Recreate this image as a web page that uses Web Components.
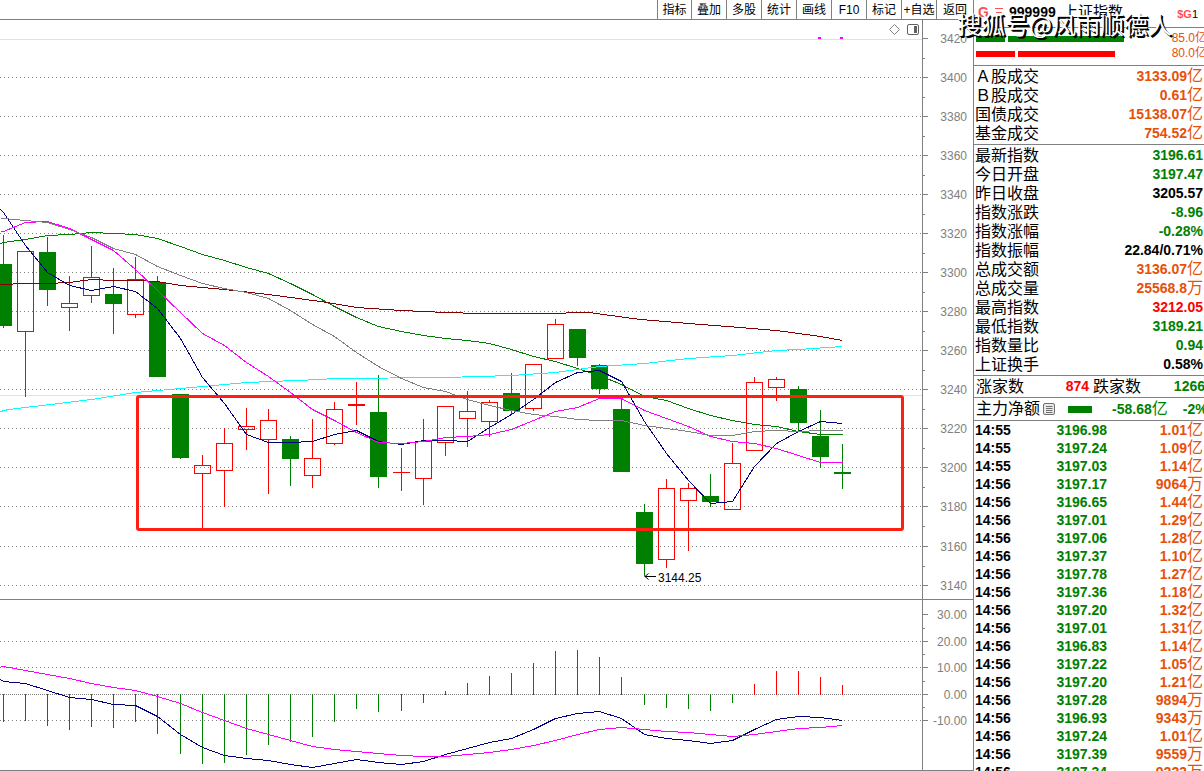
<!DOCTYPE html>
<html lang="zh-CN">
<head>
<meta charset="utf-8">
<title>上证指数</title>
<style>
html, body { margin: 0; height: 100%; }
body { overflow: hidden; background: #fff; color: #000; font: 12px "Liberation Sans", "Noto Sans CJK SC", sans-serif; }
</style>
</head>
<body>
<stock-app></stock-app>
<script>
const GREEN = '#008000', RED = '#ff0000', GRAY = '#808080';
const attach = (el, html) => { el.attachShadow({ mode: 'open' }).innerHTML = html; };

/* Toolbar */
customElements.define('tool-bar', class extends HTMLElement {
  constructor() {
    super();
    attach(this, `<style>
      :host { display: flex; justify-content: flex-end; height: 19px; flex: none; border-bottom: 1px solid #808080; overflow: hidden; }
    </style><slot></slot>`);
  }
});
customElements.define('tool-item', class extends HTMLElement {
  constructor() {
    super();
    attach(this, `<style>
      :host { display: block; width: 35px; }
      :host(:first-child) { width: 34px; }
      :host(:last-child) { width: 37px; }
      button { width: 100%; height: 19px; padding: 0; margin: 0; border: 0; border-left: 1px solid #808080; background: none;
        color: #000; font: inherit; line-height: 18px; white-space: nowrap; text-align: center; }
    </style><button type="button"><slot></slot></button>`);
  }
});

/* Charts */
const CX = [3,25,47,69,91,113,135,157,180,202,224,246,268,290,312,334,356,378,401,423,445,467,489,511,533,555,577,599,621,644,666,688,710,732,754,776,798,820,842];
const svgRect = (x, y, w, h, f) => `<rect x="${x}" y="${y}" width="${w}" height="${h}" fill="${f}"/>`;
const poly = (pts, c) => `<polyline transform="translate(.5 .5)" points="${pts}" fill="none" stroke="${c}" stroke-width="1"/>`;
const series = (ys, c) => poly(ys.map((y, i) => (i === 0 ? 0 : CX[i - 1]) + ',' + y).join(' '), c);
const dots = (y, gap) => `<line x1="0" x2="922" y1="${y}" y2="${y}" transform="translate(0 .5)" stroke="${GRAY}" stroke-dasharray="1 ${gap}"/>`;
const chartCss = `<style>
  :host { display: block; }
  svg { display: block; width: 100%; height: auto; }
  text { font: 12px "Liberation Sans", sans-serif; fill: #808080; }
  .mark { fill: #000; }
</style>`;

customElements.define('price-chart', class extends HTMLElement {
  constructor() {
    super();
    /* colour, high, body top, body bottom, low */
    const candles = [
      ['g',235,264,326,328],['r',251,251,332,397],['g',237,252,290,306],['r',276,303,308,331],['r',246,277,296,303],
      ['g',268,294,304,334],['r',257,279,315,318],['g',276,282,377,377],['g',394,394,458,459],['r',455,465,474,528],
      ['r',428,443,471,507],['r',408,426,430,450],['r',409,420,440,494],['g',436,439,459,486],['r',419,458,476,488],
      ['r',402,409,444,445],['r',382,404,406,425],['g',375,412,477,488],['r',448,472,473,491],['r',419,441,479,505],
      ['r',406,406,443,456],['r',391,411,419,447],['r',400,402,422,437],['g',373,393,411,414],['r',364,364,409,411],
      ['r',319,324,359,359],['g',329,329,358,366],['g',364,365,389,394],['g',399,409,472,472],['g',504,512,564,576],
      ['r',479,488,560,568],['r',483,488,501,551],['g',474,496,502,507],['r',443,463,510,510],['r',377,382,451,451],
      ['r',377,379,388,401],['g',386,389,423,431],['g',410,436,457,468],['g',444,472,474,489]];
    const grid = [77,116,155,194,233,272,311,350,389,428,467,506,546,585];
    const levels = [38, ...grid];
    let s = '';
    grid.forEach(y => s += dots(y, 3));
    s += svgRect(0, 39, 922, 1, '#ffff00') + svgRect(0, 395, 922, 1, '#ffff00');
    candles.forEach(([k, hi, t, b, lo], i) => {
      const x = CX[i], c = k === 'g' ? GREEN : RED;
      if (k === 'g' || b - t < 3) {
        s += svgRect(x, hi, 1, lo - hi, c) + svgRect(x - 8, t, 17, b - t, c);
      } else {
        s += svgRect(x, hi, 1, t - hi, c) + svgRect(x, b, 1, lo - b, c);
        s += `<rect x="${x - 8}" y="${t}" width="16" height="${b - t - 1}" transform="translate(.5 .5)" fill="none" stroke="${c}"/>`;
      }
    });
    s += series([243,242,239,235,234,232,233,234,238,246,254,260,267,273,283,294,306,317,326,331,335,338,340,343,349,356,361,368,375,384,396,400,408,415,420,424,426,431,434,434], GREEN);
    s += poly('0,284 25,283 47,283 69,282 91,279 113,280 135,280 157,281 180,285 224,289 268,294 320,301 356,307 401,310 445,312 480,313 543,313 589,312 603,314 640,319 688,323 727,326 776,330 798,333 820,336 842,340', '#800000');
    s += poly('0,411 8,409 50,404 91,399 135,392 180,388 202,386 246,382 320,379 334,378 445,377 511,375 555,372 599,366 644,363 688,358 732,355 776,350 798,349 842,346', '#00ffff');
    s += series([209,212,245,272,285,290,286,291,308,338,377,403,434,442,442,441,434,430,441,444,440,440,441,427,414,399,382,372,370,381,421,453,480,503,501,466,443,431,421,423], '#000080');
    s += series([231,231,222,221,228,239,250,269,290,312,333,345,362,376,392,409,420,432,442,443,441,437,436,434,429,420,411,407,398,398,410,418,426,436,441,443,448,455,462,462], '#ff00ff');
    s += series([218,218,220,222,229,237,248,254,266,275,283,288,292,298,310,324,336,352,366,378,387,391,399,405,410,414,416,419,420,420,425,428,431,435,435,431,430,431,430,430], GRAY);
    s += svgRect(818, 37, 3, 2, '#ff00ff') + svgRect(840, 37, 3, 2, '#ff00ff');
    s += svgRect(922, 20, 1, 580, GRAY) + svgRect(0, 599, 973, 1, GRAY);
    levels.forEach((y, i) => {
      s += svgRect(923, y, 5, 1, GRAY);
      if (i < levels.length - 1) s += svgRect(923, y + 20, 2, 1, GRAY);
    });
    const labels = levels.map((y, i) => `<text x="967" y="${y + 5}" text-anchor="end">${3420 - i * 20}</text>`).join('');
    attach(this, chartCss + `<svg viewBox="0 20 973 580" role="img" aria-label="K线图">
      <g shape-rendering="crispEdges">${s}</g>${labels}
      <rect x="137.5" y="396.5" width="765" height="133" rx="1.5" fill="none" stroke="#ff2012" stroke-width="3"/>
      <path d="M644.5 576.5H656M648.5 573.5L645 576.5L648.5 579.5" fill="none" stroke="#000"/>
      <text class="mark" x="658" y="582">3144.25</text>
      <path d="M894.5 24.5l5 5l-5 5l-5-5z" fill="none" stroke="#808080"/>
      <rect x="907.5" y="24.5" width="11" height="10" rx="1.5" fill="none" stroke="#606060"/>
      <rect x="914" y="26" width="3" height="7" fill="#606060"/>
    </svg>`);
  }
});

customElements.define('macd-chart', class extends HTMLElement {
  constructor() {
    super();
    const bars = [722,721,726,730,727,728,722,734,754,764,763,755,745,742,737,722,709,712,711,703,691,683,676,673,663,651,650,657,677,705,708,709,711,703,684,671,671,677,685];
    let s = [641, 667, 720].map(y => dots(y, 3)).join('') + dots(694, 1);
    bars.forEach((y, i) => s += y > 694 ? svgRect(CX[i], 694, 1, y - 694, GREEN) : svgRect(CX[i], y, 1, 695 - y, RED));
    s += series([679,681,683,690,697,699,704,705,716,734,747,755,758,760,764,767,763,759,762,764,761,754,748,742,738,729,718,713,711,718,734,738,740,743,740,729,719,716,717,720], '#000080');
    s += series([666,666,670,674,678,683,687,690,696,703,712,720,728,734,740,746,749,751,753,755,756,756,754,752,749,745,740,734,729,727,729,731,732,734,736,734,731,728,727,725], '#ff00ff');
    s += svgRect(922, 600, 1, 171, GRAY) + svgRect(0, 770, 973, 1, GRAY);
    [614, 641, 667, 694, 720].forEach(y => s += svgRect(923, y, 5, 1, GRAY));
    [628, 654, 681, 707].forEach(y => s += svgRect(923, y, 2, 1, GRAY));
    const labels = [[614, '30.00'], [641, '20.00'], [667, '10.00'], [694, '0.00'], [720, '-10.00']]
      .map(([y, t]) => `<text x="967" y="${y + 5}" text-anchor="end">${t}</text>`).join('');
    attach(this, chartCss + `<svg viewBox="0 600 973 171" role="img" aria-label="MACD"><g shape-rendering="crispEdges">${s}</g>${labels}</svg>`);
  }
});

/* Quote panel */
const unit = v => v.replace(/[亿万]/, m => `<span class="u">${m}</span>`);
const numCss = `
  table { width: 100%; border-collapse: collapse; }
  th, td { padding: 0; white-space: nowrap; vertical-align: middle; }
  th { font-weight: 400; text-align: left; font-size: 16px; }
  td { font-weight: 700; font-size: 14px; text-align: right; }
  .u { font-weight: 400; font-size: 16px; line-height: 16px; }
  .g { color: #008000; } .r { color: #ff0000; } .o { color: #e6500a; } .k { color: #000; }`;

customElements.define('quote-head', class extends HTMLElement {
  constructor() {
    super();
    attach(this, `<style>
      :host { display: flex; align-items: center; height: 27px; padding-left: 4px; border-bottom: 1px solid #808080; white-space: nowrap; }
      .g { width: 17px; font-size: 14px; font-weight: 700; color: #ff5050; line-height: 24px; }
      svg { width: 8px; height: 8px; margin: 8px 6px 0 0; }
      .code { font-size: 14px; font-weight: 700; width: 54px; line-height: 24px; }
      h1 { margin: 0; font-size: 15px; font-weight: 400; line-height: 24px; flex: 1; }
      .tag { font-size: 11px; margin-right: 6px; }
      .tag b { color: #ff5050; }
      .g, svg, .code, h1 { align-self: flex-start; }
    </style>
    <span class="g">G</span>
    <svg viewBox="0 0 8 8"><path d="M0 .5H8M1 4.5H7M0 7.5H8" stroke="#ff5050" fill="none"/></svg>
    <span class="code">999999</span><h1>上证指数</h1><span class="tag"><b>$G</b>1</span>`);
  }
});

customElements.define('order-bars', class extends HTMLElement {
  constructor() {
    super();
    attach(this, `<style>
      :host { display: block; height: 33px; padding: 3px 0 1px 2px; border-bottom: 1px solid #808080; color: #e6500a; }
      .row { display: flex; align-items: center; gap: 3px; height: 15px; line-height: 14px; white-space: nowrap; }
      i { height: 6px; }
      .g i { background: #008000; } .r i { background: #ff0000; }
      .g i:nth-child(1) { width: 29px; } .g i:nth-child(2) { width: 116px; }
      .r i:nth-child(1) { width: 39px; } .r i:nth-child(2) { width: 97px; }
      span { margin-left: auto; margin-right: -3px; height: 15px; }
    </style>
    <div class="row g"><i></i><i></i><span>85.0亿</span></div>
    <div class="row r"><i></i><i></i><span>80.0亿</span></div>`);
  }
});

customElements.define('quote-table', class extends HTMLElement {
  connectedCallback() {
    if (this.shadowRoot) return;
    const rows = this.getAttribute('rows').split(';').map(r => r.split(','));
    attach(this, `<style>
      :host { display: block; padding: 1px; border-bottom: 1px solid #808080; }
      ${numCss}
      th, td { line-height: 19px; height: 19px; }
    </style><table>${rows.map(([l, v, c]) => `<tr><th scope="row">${l}</th><td class="${c}">${unit(v)}</td></tr>`).join('')}</table>`);
  }
});

customElements.define('breadth-row', class extends HTMLElement {
  constructor() {
    super();
    attach(this, `<style>
      :host { display: flex; height: 21px; line-height: 21px; padding-left: 2px; border-bottom: 1px solid #808080; font-size: 16px; white-space: nowrap; overflow: hidden; }
      b { font-size: 14px; text-align: right; }
      .r { color: #ff0000; width: 65px; margin-right: 4px; } .g { color: #008000; flex: 1; margin-right: -1px; }
    </style><span>涨家数</span><b class="r">874</b><span>跌家数</span><b class="g">1266</b>`);
  }
});

customElements.define('net-row', class extends HTMLElement {
  constructor() {
    super();
    attach(this, `<style>
      :host { display: flex; align-items: center; height: 22px; line-height: 22px; padding-left: 2px; border-bottom: 1px solid #808080; font-size: 16px; white-space: nowrap; overflow: hidden; }
      button { width: 13px; height: 13px; padding: 0; margin: 0 12px 0 3px; border: 0; background: none; flex: none; }
      svg { display: block; width: 13px; height: 13px; }
      i { width: 24px; height: 7px; background: #008000; margin-right: 20px; flex: none; }
      b { font-size: 14px; color: #008000; margin-right: 15px; }
      b span { font-size: 16px; font-weight: 400; }
      b:last-child { margin: 0; }
    </style><span>主力净额</span>
    <button type="button" aria-label="详情"><svg viewBox="0 0 13 13"><rect x=".5" y=".5" width="11" height="11" rx="1.5" fill="#e8e8e8" stroke="#707070"/><path d="M3 3.5H9.5M3 5.5H9.5M3 7.5H9.5M3 9.5H9.5" stroke="#707070"/></svg></button>
    <i></i><b>-58.68<span>亿</span></b><b>-2%</b>`);
  }
});

customElements.define('tick-table', class extends HTMLElement {
  constructor() {
    super();
    const t = ['14:55,3196.98,1.01亿','14:55,3197.24,1.09亿','14:55,3197.03,1.14亿','14:56,3197.17,9064万','14:56,3196.65,1.44亿','14:56,3197.01,1.29亿','14:56,3197.06,1.28亿','14:56,3197.37,1.10亿','14:56,3197.78,1.27亿','14:56,3197.36,1.18亿','14:56,3197.20,1.32亿','14:56,3197.01,1.31亿','14:56,3196.83,1.14亿','14:56,3197.22,1.05亿','14:56,3197.20,1.21亿','14:56,3197.28,9894万','14:56,3196.93,9343万','14:56,3197.24,1.01亿','14:56,3197.39,9559万','14:56,3197.34,9223万'].map(r => r.split(','));
    attach(this, `<style>
      :host { display: block; flex: 1; min-height: 0; overflow: hidden; padding: 0 1px; }
      ${numCss}
      td { height: 18px; line-height: 18px; }
      td:first-child { text-align: left; width: 52px; }
      td:nth-child(2) { width: 80px; }
    </style><table>${t.map(([a, p, v]) => `<tr><td class="k">${a}</td><td class="g">${p}</td><td class="o">${unit(v)}</td></tr>`).join('')}</table>`);
  }
});

customElements.define('water-mark', class extends HTMLElement {
  constructor() {
    super();
    attach(this, `<style>
      :host { display: block; position: absolute; top: 8px; right: 32px; font-family: "Noto Sans CJK SC", sans-serif; font-size: 24px; line-height: 32px; white-space: nowrap;
        color: #fff; text-shadow: 1px 1px 0 #000, 2px 2px 0 #000; pointer-events: none; }
    </style><slot></slot>`);
  }
});

customElements.define('stock-app', class extends HTMLElement {
  constructor() {
    super();
    attach(this, `<style>
      :host { display: flex; height: 100vh; position: relative; overflow: hidden; }
      main { flex: 1; min-width: 0; display: flex; flex-direction: column; }
      aside { width: 230px; flex: none; display: flex; flex-direction: column; border-left: 1px solid #808080; overflow: hidden; }
    </style>
    <main>
      <tool-bar><tool-item>指标</tool-item><tool-item>叠加</tool-item><tool-item>多股</tool-item><tool-item>统计</tool-item><tool-item>画线</tool-item><tool-item>F10</tool-item><tool-item>标记</tool-item><tool-item>+自选</tool-item><tool-item>返回</tool-item></tool-bar>
      <price-chart></price-chart>
      <macd-chart></macd-chart>
    </main>
    <aside>
      <quote-head></quote-head>
      <order-bars></order-bars>
      <quote-table rows="Ａ股成交,3133.09亿,o;Ｂ股成交,0.61亿,o;国债成交,15138.07亿,o;基金成交,754.52亿,o"></quote-table>
      <quote-table rows="最新指数,3196.61,g;今日开盘,3197.47,g;昨日收盘,3205.57,k;指数涨跌,-8.96,g;指数涨幅,-0.28%,g;指数振幅,22.84/0.71%,k;总成交额,3136.07亿,o;总成交量,25568.8万,o;最高指数,3212.05,r;最低指数,3189.21,g;指数量比,0.94,g;上证换手,0.58%,k"></quote-table>
      <breadth-row></breadth-row>
      <net-row></net-row>
      <tick-table></tick-table>
    </aside>
    <water-mark>搜狐号@风雨顺德人</water-mark>`);
  }
});
</script>
</body>
</html>
